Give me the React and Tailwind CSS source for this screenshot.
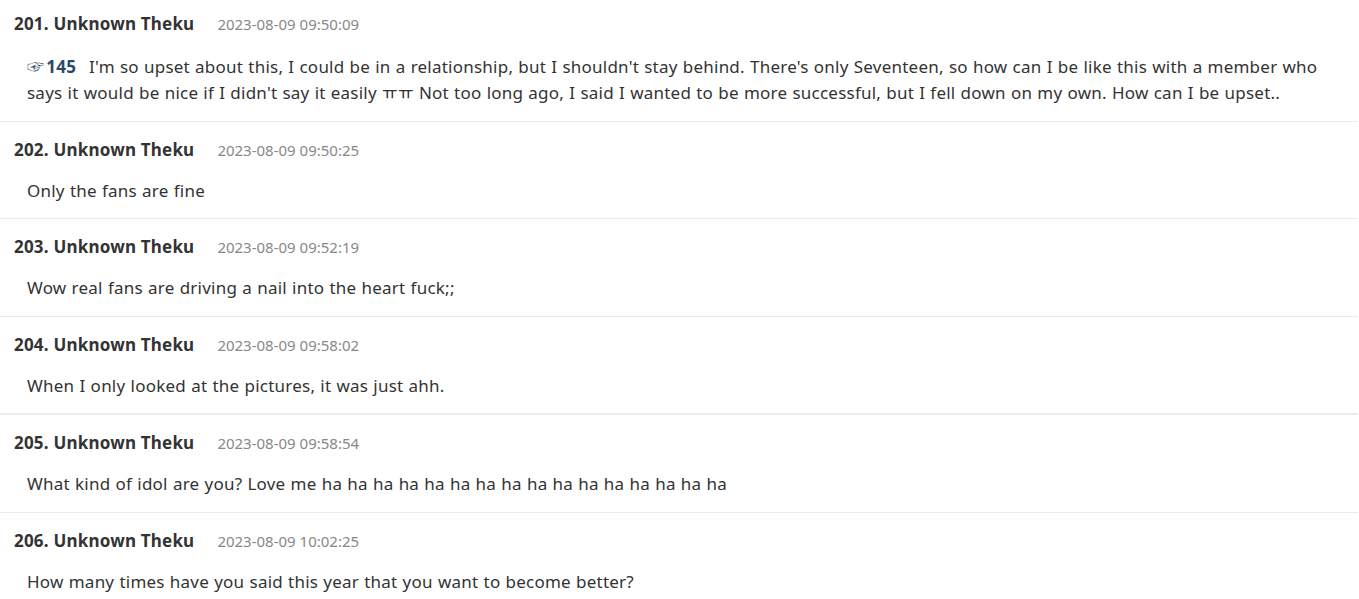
import React from "react";

const rows = [
  { n: 201, date: "2023-08-09 09:50:09", ref: "145", text: "I'm so upset about this, I could be in a relationship, but I shouldn't stay behind. There's only Seventeen, so how can I be like this with a member who says it would be nice if I didn't say it easily ㅠㅠ Not too long ago, I said I wanted to be more successful, but I fell down on my own. How can I be upset.." },
  { n: 202, date: "2023-08-09 09:50:25", text: "Only the fans are fine" },
  { n: 203, date: "2023-08-09 09:52:19", text: "Wow real fans are driving a nail into the heart fuck;;" },
  { n: 204, date: "2023-08-09 09:58:02", text: "When I only looked at the pictures, it was just ahh.", thick: true },
  { n: 205, date: "2023-08-09 09:58:54", text: "What kind of idol are you? Love me ha ha ha ha ha ha ha ha ha ha ha ha ha ha ha ha" },
  { n: 206, date: "2023-08-09 10:02:25", text: "How many times have you said this year that you want to become better?" },
];

export default function App() {
  return (
    <div className="w-[1359px] h-[599px] overflow-hidden bg-white text-[#333]" style={{ fontFamily: '"Noto Sans", "Noto Sans CJK KR", sans-serif' }}>
      {rows.map((r, i) => (
        <div key={r.n} className={`${i === 0 ? "pt-[14px]" : "pt-[18px]"} pb-[14.5px] px-[14px] ${r.thick ? "border-b-2" : "border-b"} border-[#ebebeb] mr-[1px]`}>
          <div className="flex items-baseline h-[20px] leading-[20px]">
            <span className="font-bold text-[17px] tracking-[0.2px] text-[#333]">{r.n}. Unknown Theku</span>
            <span className="ml-[23px] text-[15px] text-[#888]">{r.date}</span>
          </div>
          <div className={`${i === 0 ? "mt-[20px]" : "mt-[18px]"} pl-[13px] pr-[8px] text-[17px] tracking-[0.23px] [word-spacing:0.5px] leading-[26px] text-[#333]`}>
            {r.ref && (
              <span className="text-[#2a4a6a] font-bold mr-[13px]"><span className="font-normal mr-[2px]">☞</span>{r.ref}</span>
            )}
            {r.text}
          </div>
        </div>
      ))}
    </div>
  );
}
